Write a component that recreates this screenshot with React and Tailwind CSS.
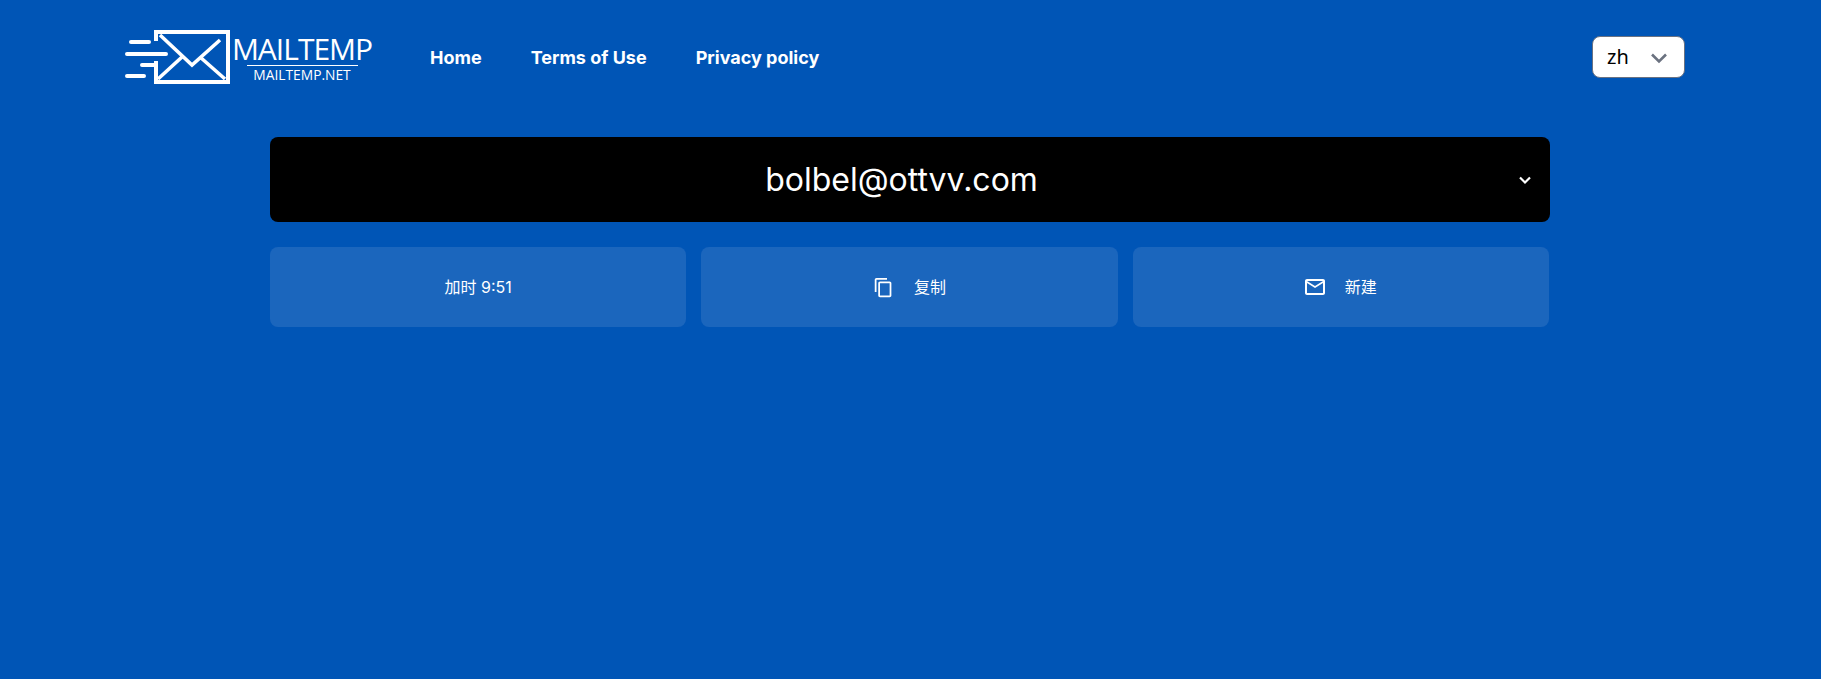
import React from "react";

const Logo = () => (
  <div className="flex items-start w-[250px] h-[60px] shrink-0">
    <svg width="108" height="60" viewBox="0 0 108 60" fill="none" stroke="white" strokeLinecap="round" className="shrink-0">
      <path d="M31 14V5H103V55H31V34" strokeWidth="4" strokeLinecap="butt" />
      <path d="M35 8L67 38L95 13" strokeWidth="3.6" strokeLinecap="butt" />
      <path d="M33 52L57 30M100 52L75 30" strokeWidth="3.6" strokeLinecap="butt" />
      <path d="M6 15H24M2 27H41M17 38H31M2 49H19" strokeWidth="4" />
    </svg>
    <div className="flex flex-col items-center w-[140px] ml-[-1px] mt-[6px] text-white font-['Open_Sans','Noto_Sans',sans-serif]">
      <span className="text-[30px] leading-[32px] tracking-[-1px] whitespace-nowrap">MAILTEMP</span>
      <span className="w-[111px] h-px bg-white mt-0" />
      <span className="text-[13.8px] leading-[16px] mt-[1px] whitespace-nowrap">MAILTEMP.NET</span>
    </div>
  </div>
);

const CopyIcon = () => (
  <svg width="21" height="21" viewBox="0 0 24 24" fill="white" className="shrink-0">
    <path d="M16 1H4c-1.1 0-2 .9-2 2v14h2V3h12V1zm3 4H8c-1.1 0-2 .9-2 2v14c0 1.1.9 2 2 2h11c1.1 0 2-.9 2-2V7c0-1.1-.9-2-2-2zm0 16H8V7h11v14z" />
  </svg>
);

const MailIcon = () => (
  <svg width="24" height="24" viewBox="0 0 24 24" fill="white" className="shrink-0 ml-[-2px]">
    <path d="M20 4H4c-1.1 0-2 .9-2 2v12c0 1.1.9 2 2 2h16c1.1 0 2-.9 2-2V6c0-1.1-.9-2-2-2zm0 14H4V8l8 5 8-5v10zm-8-7L4 6h16l-8 5z" />
  </svg>
);

const cardClass = "flex-1 h-20 rounded-lg bg-[#1b66bd] flex items-center justify-center text-white text-base";

export default function App() {
  return (
    <div className="min-h-[679px] bg-[#0055b6] font-['Inter','Noto_Sans_CJK_SC',sans-serif]">
      <header className="flex items-center h-[114px] pl-[125px] pr-[136px]">
        <Logo />
        <nav className="flex items-center gap-[49px] ml-[55px] mt-[1px] text-white text-[18px] font-bold font-['Inter',sans-serif]">
          <a>Home</a>
          <a>Terms of Use</a>
          <a>Privacy policy</a>
        </nav>
        <div className="ml-auto w-[93px] h-[42px] bg-white border border-gray-500 rounded-lg flex items-center pl-[14px] text-black text-[20px] font-['Noto_Sans',sans-serif]">
          <span>zh</span>
          <svg width="20" height="20" viewBox="0 0 20 20" fill="none" className="ml-[20px] mt-[1px]">
            <path d="M3 6.5L10 13.5L17 6.5" stroke="#6b7280" strokeWidth="2.6" />
          </svg>
        </div>
      </header>

      <main className="w-[1280px] ml-[270px] mt-[23px]">
        <div className="relative h-[85px] bg-black rounded-lg flex items-center justify-center pr-[17px] text-white text-[32px]">
          bolbel@ottvv.com
          <svg width="16" height="16" viewBox="0 0 16 16" fill="none" className="absolute right-[17px] top-[35px]">
            <path d="M3 5.5L8 10.5L13 5.5" stroke="white" strokeWidth="2.2" />
          </svg>
        </div>
        <div className="flex gap-[15px] mt-[25px] w-[1279px]">
          <div className={cardClass}>加时 9:51</div>
          <div className={cardClass}>
            <CopyIcon />
            <span className="ml-[20px]">复制</span>
          </div>
          <div className={cardClass}>
            <MailIcon />
            <span className="ml-[18px] mt-[-1px]">新建</span>
          </div>
        </div>
      </main>
    </div>
  );
}
